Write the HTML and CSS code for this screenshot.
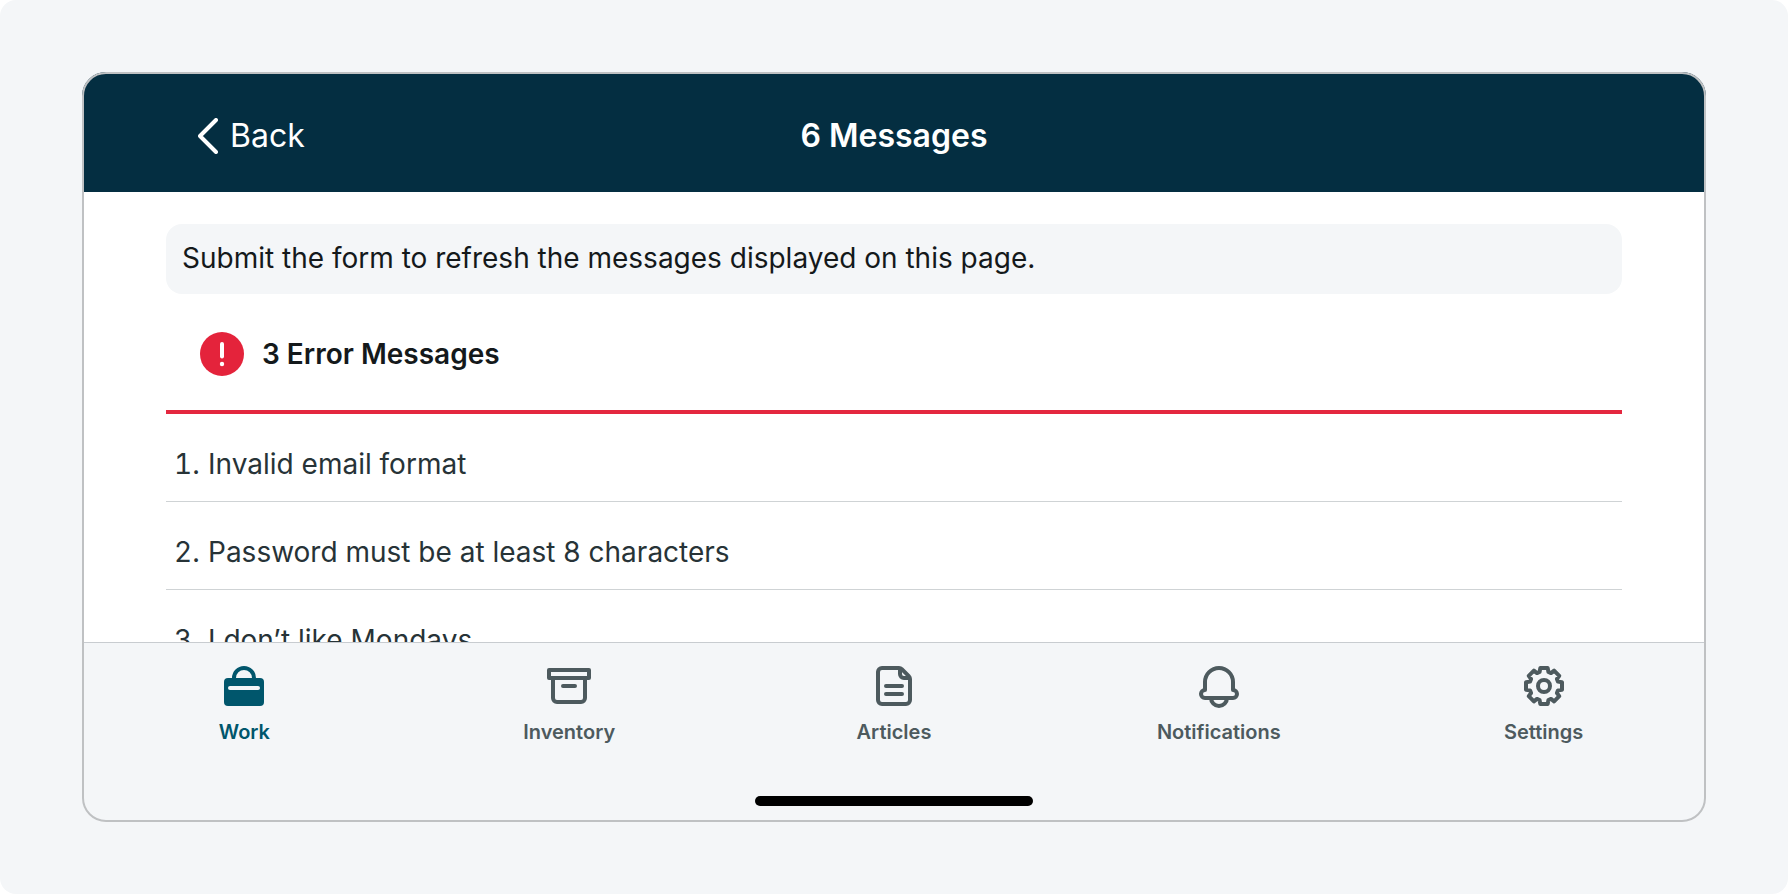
FILE: index.html
```html
<!DOCTYPE html>
<html lang="en">
<head>
<meta charset="utf-8">
<meta name="viewport" content="width=device-width, initial-scale=1">
<title>6 Messages</title>
<link rel="stylesheet" href="styles.css">
</head>
<body>
<div class="page">
  <div class="device">
    <header class="topbar">
      <button class="back" type="button">
        <svg class="back-icon" viewBox="0 0 20 36" aria-hidden="true"><path d="M18 2 2 18 18 34"/></svg>
        Back
      </button>
      <h1 class="title">6 Messages</h1>
    </header>
    <main class="content">
      <p class="hint">Submit the form to refresh the messages displayed on this page.</p>
      <section class="group">
        <h2 class="group-title">
          <svg class="error-icon" viewBox="0 0 44 44" aria-hidden="true">
            <circle cx="22" cy="22" r="22"/>
            <path d="M22 12v12.500"/>
            <circle class="dot" cx="22" cy="32" r="2.200"/>
          </svg>
          3 Error Messages
        </h2>
        <ol class="messages">
          <li class="message"><span class="number">1.</span><span>Invalid email format</span></li>
          <li class="message"><span class="number">2.</span><span>Password must be at least 8 characters</span></li>
          <li class="message"><span class="number">3.</span><span>I don’t like Mondays</span></li>
        </ol>
      </section>
    </main>
    <footer class="bottom">
      <nav class="tabs" aria-label="Main">
        <a class="tab active" href="#work" aria-current="page">
          <svg class="tab-icon" viewBox="0 0 44 44" aria-hidden="true">
            <rect class="solid" x="2" y="12" width="40" height="28" rx="4"/>
            <path d="M12 13v-1a10 10 0 0 1 20 0v1"/>
            <path class="slot" d="M8 22h28"/>
          </svg>
          Work
        </a>
        <a class="tab" href="#inventory">
          <svg class="tab-icon" viewBox="0 0 44 44" aria-hidden="true">
            <path d="M2 4h40v8H2zM6 12v20a4 4 0 0 0 4 4h24a4 4 0 0 0 4-4V12M16 20h12"/>
          </svg>
          Inventory
        </a>
        <a class="tab" href="#articles">
          <svg class="tab-icon" viewBox="0 0 44 44" aria-hidden="true">
            <path d="M10 2h17c1 0 2 .4 2.800 1.200l7 7c.8.8 1.200 1.800 1.200 2.800v21a4 4 0 0 1-4 4H10a4 4 0 0 1-4-4V6a4 4 0 0 1 4-4zM28 3v5a4 4 0 0 0 4 4h5M14 20h16M14 28h16"/>
          </svg>
          Articles
        </a>
        <a class="tab" href="#notifications">
          <svg class="tab-icon" viewBox="0 0 44 44" aria-hidden="true">
            <path d="M22 2A14 14 0 0 0 8 16v8c-2.200 0-4 1.800-4 4s1.800 4 4 4h28c2.200 0 4-1.800 4-4s-1.800-4-4-4v-8A14 14 0 0 0 22 2zM14 32a8 8 0 0 0 16 0"/>
          </svg>
          Notifications
        </a>
        <a class="tab" href="#settings">
          <svg class="tab-icon" viewBox="-22 -20 44 44" aria-hidden="true">
            <path d="M-3.700-18H3.700L4.400-14 7-12.900 10.100-15.300 15.300-10.100 12.900-7 14-4.400 18-3.700V3.700L14 4.400 12.900 7 15.300 10.100 10.100 15.300 7 12.900 4.400 14 3.700 18H-3.700L-4.400 14-7 12.900-10.100 15.300-15.300 10.100-12.900 7-14 4.400-18 3.700V-3.700L-14-4.400-12.900-7-15.300-10.100-10.100-15.300-7-12.900-4.400-14z"/>
            <circle cx="0" cy="0" r="6"/>
          </svg>
          Settings
        </a>
      </nav>
      <div class="home-indicator"></div>
    </footer>
  </div>
</div>
</body>
</html>
```

FILE: styles.css
```css
* {
  box-sizing: border-box;
}

body {
  margin: 0;
  background: #fff;
  color: #14191b;
  font-family: Inter, "Liberation Sans", sans-serif;
}

h1, h2, p, ol {
  margin: 0;
  padding: 0;
}

.page {
  display: flex;
  height: 100vh;
  padding: 72px 82px;
  border-radius: 16px;
  background: #f4f6f8;
}

.device {
  flex: 1;
  display: flex;
  flex-direction: column;
  min-width: 0;
  border-radius: 24px;
  outline: 2px solid #bfc1c3;
  outline-offset: -2px;
  background: #fff;
  overflow: hidden;
}

.topbar {
  display: grid;
  grid-template-columns: 1fr auto 1fr;
  align-items: center;
  padding: 44px 116px 36px;
  background: #042e41;
  color: #fff;
}

.back {
  display: flex;
  align-items: center;
  gap: 12px;
  padding: 0;
  border: 0;
  background: none;
  color: inherit;
  font: inherit;
  font-size: 32px;
  line-height: 40px;
}

.back-icon {
  width: 20px;
  height: 36px;
  fill: none;
  stroke: currentColor;
  stroke-width: 4px;
  stroke-linecap: round;
  stroke-linejoin: round;
}

.title {
  font-size: 32px;
  font-weight: 600;
  line-height: 40px;
}

.content {
  flex: 1;
  min-height: 0;
  padding: 32px 84px 0;
  overflow-y: auto;
  scrollbar-width: none;
  font-size: 28px;
  line-height: 36px;
}

.hint {
  padding: 16px 16px 18px;
  border-radius: 16px;
  background: #f4f6f8;
}

.group-title {
  display: flex;
  align-items: center;
  gap: 18px;
  padding: 38px 34px 34px;
  border-bottom: 4px solid #e4273f;
  font-size: 28px;
  font-weight: 600;
}

.error-icon {
  width: 44px;
  height: 44px;
  fill: #e4233b;
  stroke: #fff;
  stroke-width: 4px;
  stroke-linecap: round;
}

.error-icon circle {
  stroke: none;
}

.error-icon .dot {
  fill: #fff;
}

.messages {
  list-style: none;
  color: #273337;
}

.message {
  display: flex;
  gap: 8px;
  height: 88px;
  padding: 32px 8px 0;
  border-bottom: 1px solid #cfd3d5;
}

.number {
  width: 26px;
  font-variant-numeric: tabular-nums;
}

.bottom {
  display: flex;
  flex-direction: column;
  align-items: center;
  gap: 50px;
  padding: 23px 0 16px;
  border-top: 1px solid #c8ccd0;
  background: #f4f6f8;
}

.tabs {
  display: grid;
  grid-template-columns: repeat(5, 1fr);
  width: 100%;
}

.tab {
  display: flex;
  flex-direction: column;
  align-items: center;
  gap: 8px;
  color: #4d5a5e;
  font-size: 20px;
  font-weight: 600;
  line-height: 28px;
  text-decoration: none;
}

.active {
  color: #00566c;
}

.tab-icon {
  width: 44px;
  height: 44px;
  fill: none;
  stroke: currentColor;
  stroke-width: 4px;
  stroke-linecap: round;
  stroke-linejoin: round;
}

.tab-icon .solid {
  fill: currentColor;
  stroke: none;
}

.tab-icon .slot {
  stroke: #f4f6f8;
}

.home-indicator {
  width: 278px;
  height: 10px;
  border-radius: 5px;
  background: #000;
}
```
